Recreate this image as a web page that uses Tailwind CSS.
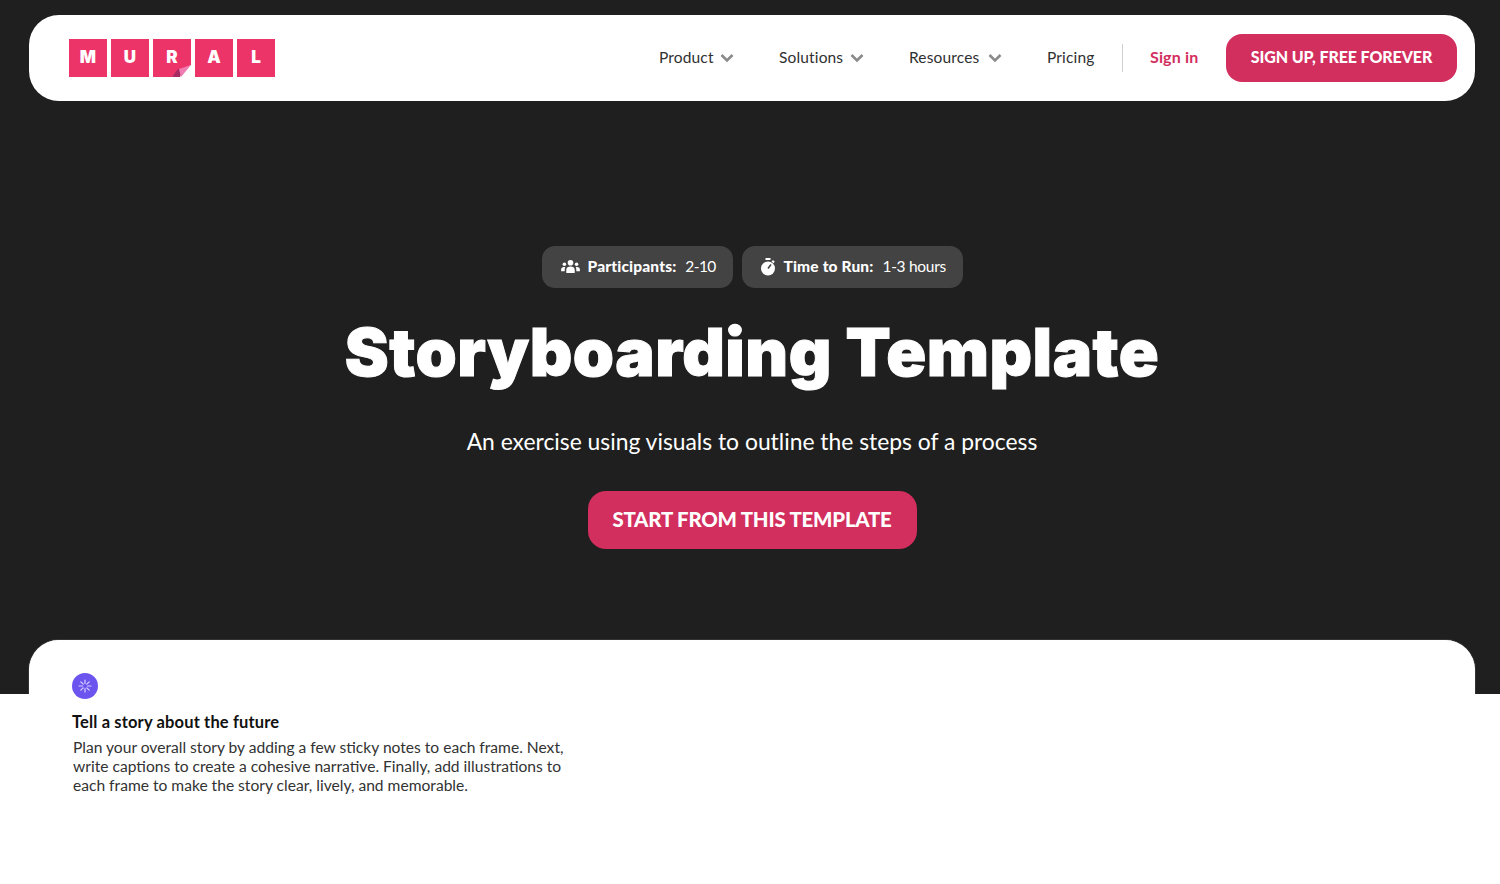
<!doctype html>
<html><head><meta charset="utf-8"><script src="https://cdn.jsdelivr.net/npm/@tailwindcss/browser@4"></script></head>
<body class="bg-white font-['Lato',sans-serif]">
<div class="h-[884px] overflow-hidden flex flex-col bg-[linear-gradient(#1f1f1f_694px,#ffffff_694px)]">
<header class="mt-[15px] mx-[29px] w-[1446px] h-[86px] shrink-0 bg-white rounded-[30px] flex items-center pl-[40px] pr-[18px]">
  <div class="flex gap-[4px] font-['Inter',sans-serif] font-black text-[17px] text-white">
    <div class="w-[38px] h-[38px] bg-[#ec3468] flex items-center justify-center">M</div>
    <div class="w-[38px] h-[38px] bg-[#ec3468] flex items-center justify-center">U</div>
    <div class="relative w-[38px] h-[38px] bg-[#ec3468] flex items-center justify-center">R
      <svg class="absolute right-0 bottom-0" width="19" height="12" viewBox="0 0 19 12"><polygon points="19,0 19,12 0,12 8,5" fill="#fff"/><polygon points="0,12 6,4 11,4 8,12" fill="#a52b62"/><polygon points="7,4 19,0 9,12" fill="#f07bb0"/></svg>
    </div>
    <div class="w-[38px] h-[38px] bg-[#ec3468] flex items-center justify-center">A</div>
    <div class="w-[38px] h-[38px] bg-[#ec3468] flex items-center justify-center">L</div>
  </div>
  <nav class="ml-auto flex items-center text-[15.5px] text-[#303030] tracking-[0.15px]">
    <span class="w-[55px] ml-px">Product</span><svg class="ml-[6px] w-[14px] h-[10px]" viewBox="0 0 14 10" fill="none" stroke="#8a8a8a" stroke-width="2.6"><path d="M1.500 2l5.500 5.500L12.500 2"/></svg>
    <span class="ml-[45px] w-[65px]">Solutions</span><svg class="ml-[6px] w-[14px] h-[10px]" viewBox="0 0 14 10" fill="none" stroke="#8a8a8a" stroke-width="2.6"><path d="M1.500 2l5.500 5.500L12.500 2"/></svg>
    <span class="ml-[45px] w-[73px]">Resources</span><svg class="ml-[6px] w-[14px] h-[10px]" viewBox="0 0 14 10" fill="none" stroke="#8a8a8a" stroke-width="2.6"><path d="M1.500 2l5.500 5.500L12.500 2"/></svg>
    <span class="ml-[45px] w-[48px]">Pricing</span>
    <span class="ml-[26.5px] w-[1.5px] h-[28px] bg-[#cfcfcf]"></span>
    <span class="ml-[27px] text-[#d22e5e] font-bold w-[50px] text-[16px] leading-[20px] pb-[2px]">Sign in</span>
    <a class="ml-[26px] w-[231px] h-[48px] rounded-[16px] bg-[#d22e5e] text-white font-black text-[16px] tracking-[-0.1px] flex items-center justify-center pb-[2px]">SIGN UP, FREE FOREVER</a>
  </nav>
</header>
<main class="flex-1 mt-[145px] flex flex-col items-center w-[1504px]">
  <div class="flex gap-[9px] text-white text-[15.5px]">
    <div class="h-[42px] w-[191px] rounded-[13px] bg-[#434343] flex items-center pl-[19px] pb-px">
      <svg class="w-[19px] h-[15px]" viewBox="0 0 20 16" fill="#fff"><circle cx="10" cy="4" r="3"/><circle cx="3.500" cy="5.500" r="1.900"/><circle cx="16.500" cy="5.500" r="1.900"/><path d="M5.500 15v-3.500C5.500 9 7.500 8 10 8s4.500 1 4.500 3.500V15zM0 13v-2c0-1.500 1-2.500 3-2.500.6 0 1 .1 1.400.3-.4.700-.6 1.600-.6 2.700v1.500zM20 13v-2c0-1.500-1-2.500-3-2.500-.6 0-1 .1-1.400.3.400.7.600 1.600.6 2.700v1.500z"/></svg>
      <b class="ml-[8px] font-black tracking-[0.15px]">Participants:</b><span class="ml-[9px] tracking-[-0.6px]">2-10</span>
    </div>
    <div class="h-[42px] w-[221px] rounded-[13px] bg-[#434343] flex items-center pl-[18px] pb-px">
      <svg class="w-[16px] h-[18px]" viewBox="0 0 16 18"><rect x="5.500" y="0" width="5" height="2" fill="#fff"/><rect x="12" y="2.500" width="2.500" height="2" fill="#fff" transform="rotate(45 13 3.500)"/><circle cx="8" cy="10.500" r="7" fill="#fff"/><path d="M8 10.500L11 6.500" stroke="#434343" stroke-width="1.600"/></svg>
      <b class="ml-[8px] font-black tracking-[0.15px]">Time to Run:</b><span class="ml-[9px] tracking-[-0.3px]">1-3 hours</span>
    </div>
  </div>
  <h1 class="mt-[24px] font-['Inter',sans-serif] text-[66px] leading-[80px] font-black text-white tracking-[0.5px] [-webkit-text-stroke:1px_white]">Storyboarding Template</h1>
  <p class="mt-[34px] text-[22.850px] leading-[30px] text-white">An exercise using visuals to outline the steps of a process</p>
  <a class="mt-[35px] w-[329px] h-[58px] rounded-[18px] bg-[#d22e5e] text-white font-black text-[20.400px] tracking-[-0.2px] flex items-center justify-center pb-px">START FROM THIS TEMPLATE</a>
</main>
<section class="mx-[29px] w-[1446px] h-[244px] shrink-0 bg-white rounded-t-[30px] pl-[43px] pt-[33px] shadow-[0_0_1px_#f0f0f0]">
  <div class="w-[26px] h-[26px] rounded-full bg-[#6b55ee] flex items-center justify-center">
    <svg class="w-[14px] h-[14px]" viewBox="0 0 14 14" stroke="#d9d3ff" stroke-width="1.200" stroke-linecap="round"><path d="M7 1v3.500M7 9.500V13M1 7h3.500M9.500 7H13M2.800 2.800l2.400 2.400M8.800 8.800l2.400 2.400M11.200 2.800L8.800 5.200M5.200 8.800l-2.400 2.400"/></svg>
  </div>
  <h2 class="mt-[13px] text-[16.500px] leading-[20px] font-bold text-[#111] tracking-[0.15px]">Tell a story about the future</h2>
  <p class="mt-[6px] ml-px w-[500px] text-[15.600px] leading-[19px] text-[#333]">Plan your overall story by adding a few sticky notes to each frame. Next, write captions to create a cohesive narrative. Finally, add illustrations to each frame to make the story clear, lively, and memorable.</p>
</section>
</div>
</body></html>
